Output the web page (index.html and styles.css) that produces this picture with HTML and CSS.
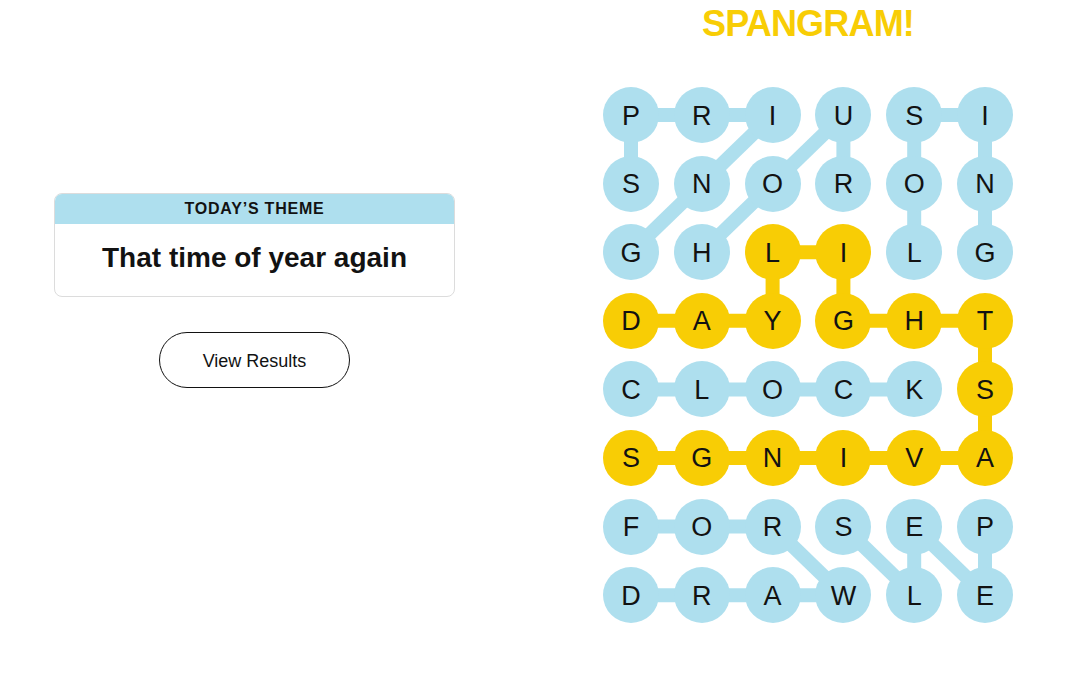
FILE: index.html
```html
<!DOCTYPE html>
<html lang="en">
<head>
<meta charset="utf-8">
<title>Strands</title>
<link rel="stylesheet" href="styles.css">
</head>
<body>
<main class="layout">
  <section class="side">
    <div class="theme-card">
      <div class="theme-head">TODAY’S THEME</div>
      <div class="theme-body">That time of year again</div>
    </div>
    <button class="results-btn" type="button">View Results</button>
  </section>
  <section class="play">
    <h1 class="spangram-title">SPANGRAM!</h1>
    <div class="board">
      <svg class="links" width="410" height="536" viewBox="0 0 410 536" aria-hidden="true">
        <g class="blue-links" stroke="#aedfee" stroke-width="14" fill="none">
          <!-- SPRING -->
          <line x1="28" y1="96.6" x2="28" y2="28"/>
          <line x1="28" y1="28" x2="169.6" y2="28"/>
          <line x1="169.6" y1="28" x2="98.8" y2="96.6"/>
          <line x1="98.8" y1="96.6" x2="28" y2="165.2"/>
          <!-- HOUR -->
          <line x1="98.8" y1="165.2" x2="169.6" y2="96.6"/>
          <line x1="169.6" y1="96.6" x2="240.4" y2="28"/>
          <line x1="240.4" y1="28" x2="240.4" y2="96.6"/>
          <!-- LOSING -->
          <line x1="311.2" y1="165.2" x2="311.2" y2="28"/>
          <line x1="311.2" y1="28" x2="382" y2="28"/>
          <line x1="382" y1="28" x2="382" y2="165.2"/>
          <!-- CLOCK -->
          <line x1="28" y1="302.4" x2="311.2" y2="302.4"/>
          <!-- FORWARD -->
          <line x1="28" y1="439.6" x2="169.6" y2="439.6"/>
          <line x1="169.6" y1="439.6" x2="240.4" y2="508.2"/>
          <line x1="240.4" y1="508.2" x2="28" y2="508.2"/>
          <!-- SLEEP -->
          <line x1="240.4" y1="439.6" x2="311.2" y2="508.2"/>
          <line x1="311.2" y1="508.2" x2="311.2" y2="439.6"/>
          <line x1="311.2" y1="439.6" x2="382" y2="508.2"/>
          <line x1="382" y1="508.2" x2="382" y2="439.6"/>
        </g>
        <g class="gold-links" stroke="#f8cd05" stroke-width="14" fill="none">
          <line x1="28" y1="233.8" x2="169.6" y2="233.8"/>
          <line x1="169.6" y1="233.8" x2="169.6" y2="165.2"/>
          <line x1="169.6" y1="165.2" x2="240.4" y2="165.2"/>
          <line x1="240.4" y1="165.2" x2="240.4" y2="233.8"/>
          <line x1="240.4" y1="233.8" x2="382" y2="233.8"/>
          <line x1="382" y1="233.8" x2="382" y2="371"/>
          <line x1="382" y1="371" x2="28" y2="371"/>
        </g>
      </svg>
      <div class="grid">
        <span class="cell found">P</span><span class="cell found">R</span><span class="cell found">I</span><span class="cell found">U</span><span class="cell found">S</span><span class="cell found">I</span>
        <span class="cell found">S</span><span class="cell found">N</span><span class="cell found">O</span><span class="cell found">R</span><span class="cell found">O</span><span class="cell found">N</span>
        <span class="cell found">G</span><span class="cell found">H</span><span class="cell gold">L</span><span class="cell gold">I</span><span class="cell found">L</span><span class="cell found">G</span>
        <span class="cell gold">D</span><span class="cell gold">A</span><span class="cell gold">Y</span><span class="cell gold">G</span><span class="cell gold">H</span><span class="cell gold">T</span>
        <span class="cell found">C</span><span class="cell found">L</span><span class="cell found">O</span><span class="cell found">C</span><span class="cell found">K</span><span class="cell gold">S</span>
        <span class="cell gold">S</span><span class="cell gold">G</span><span class="cell gold">N</span><span class="cell gold">I</span><span class="cell gold">V</span><span class="cell gold">A</span>
        <span class="cell found">F</span><span class="cell found">O</span><span class="cell found">R</span><span class="cell found">S</span><span class="cell found">E</span><span class="cell found">P</span>
        <span class="cell found">D</span><span class="cell found">R</span><span class="cell found">A</span><span class="cell found">W</span><span class="cell found">L</span><span class="cell found">E</span>
      </div>
    </div>
  </section>
</main>
</body>
</html>
```

FILE: styles.css
```css
* {
  box-sizing: border-box;
}

html, body {
  margin: 0;
  padding: 0;
  background: #ffffff;
}

body {
  font-family: "Liberation Sans", Arial, sans-serif;
  color: #121212;
  width: 1082px;
  height: 675px;
  overflow: hidden;
}

.layout {
  display: flex;
  align-items: flex-start;
}

.side {
  width: 509px;
  display: flex;
  flex-direction: column;
  align-items: center;
  padding-top: 193px;
}

.theme-card {
  width: 401px;
  border: 1px solid #dcdcdc;
  border-radius: 8px;
  overflow: hidden;
  background: #ffffff;
}

.theme-head {
  background: #aedfee;
  height: 30px;
  line-height: 30px;
  text-align: center;
  font-size: 16px;
  font-weight: 700;
  letter-spacing: 0.8px;
  color: #121212;
}

.theme-body {
  height: 72px;
  display: flex;
  align-items: center;
  justify-content: center;
  font-size: 28px;
  font-weight: 700;
  color: #121212;
  padding-bottom: 4px;
}

.results-btn {
  margin-top: 35px;
  width: 191px;
  height: 56px;
  border: 1px solid #121212;
  border-radius: 28px;
  background: #ffffff;
  font-family: "Liberation Sans", Arial, sans-serif;
  font-size: 18px;
  color: #121212;
  padding: 2px 0 0;
  cursor: pointer;
}

.play {
  margin-left: 94px;
  width: 410px;
  display: flex;
  flex-direction: column;
  align-items: center;
}

.spangram-title {
  margin: 5px 0 0;
  height: 37px;
  font-size: 36px;
  line-height: 37px;
  font-weight: 700;
  letter-spacing: -0.8px;
  color: #f8cd05;
}

.board {
  position: relative;
  margin-top: 45px;
  width: 410px;
  height: 536px;
}

.links {
  position: absolute;
  left: 0;
  top: 0;
}

.grid {
  position: relative;
  display: grid;
  grid-template-columns: repeat(6, 56px);
  grid-auto-rows: 56px;
  column-gap: 14.8px;
  row-gap: 12.6px;
}

.cell {
  width: 56px;
  height: 56px;
  border-radius: 50%;
  display: flex;
  align-items: center;
  justify-content: center;
  font-size: 27px;
  color: #121212;
  padding-top: 2px;
}

.cell.found {
  background: #aedfee;
}

.cell.gold {
  background: #f8cd05;
}
```
